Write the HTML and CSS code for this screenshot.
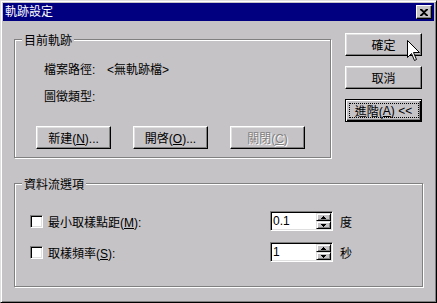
FILE: index.html
```html
<!DOCTYPE html>
<html lang="zh-Hant">
<head>
    <meta charset="UTF-8">
    <title>軌跡設定</title>
    <link rel="stylesheet" href="styles.css">
</head>
<body>
    <div class="window">
        <div class="titlebar">
            <span class="title">軌跡設定</span>
            <button class="close-btn">
                <svg width="8" height="7" viewBox="0 0 8 7"><path d="M0 0h2l2 2 2-2h2v1L5 3.5 8 6v1H6L4 5 2 7H0V6l3-2.5L0 1z" fill="#000"/></svg>
            </button>
        </div>
        <div class="content">
            <div class="top-row">
                <div class="group group-track">
                    <div class="legend">目前軌跡</div>
                    <div class="info-grid">
                        <span>檔案路徑:</span><span>&lt;無軌跡檔&gt;</span>
                        <span class="row-gap">圖徵類型:</span><span></span>
                    </div>
                    <div class="track-buttons">
                        <button class="btn">新建(<u>N</u>)...</button>
                        <button class="btn">開啓(<u>O</u>)...</button>
                        <button class="btn disabled">關閉(<u>C</u>)</button>
                    </div>
                </div>
                <div class="side-buttons">
                    <button class="btn">確定</button>
                    <button class="btn">取消</button>
                    <button class="btn default"><span class="focus">進階(<u>A</u>) &lt;&lt;</span></button>
                </div>
            </div>
            <div class="group group-stream">
                <div class="legend">資料流選項</div>
                <div class="opt-row first">
                    <span class="check"></span>
                    <span class="opt-label">最小取樣點距(<u>M</u>):</span>
                    <div class="spin">
                        <span class="spin-value">0.1</span>
                        <div class="spin-arrows">
                            <span class="arrow"><svg width="5" height="3" viewBox="0 0 5 3"><path d="M2 0h1v1h1v1h1v1H0V2h1V1h1z" fill="#000"/></svg></span>
                            <span class="arrow"><svg width="5" height="3" viewBox="0 0 5 3"><path d="M0 0h5v1H4v1H3v1H2V2H1V1H0z" fill="#000"/></svg></span>
                        </div>
                    </div>
                    <span class="unit">度</span>
                </div>
                <div class="opt-row">
                    <span class="check"></span>
                    <span class="opt-label">取樣頻率(<u>S</u>):</span>
                    <div class="spin">
                        <span class="spin-value">1</span>
                        <div class="spin-arrows">
                            <span class="arrow"><svg width="5" height="3" viewBox="0 0 5 3"><path d="M2 0h1v1h1v1h1v1H0V2h1V1h1z" fill="#000"/></svg></span>
                            <span class="arrow"><svg width="5" height="3" viewBox="0 0 5 3"><path d="M0 0h5v1H4v1H3v1H2V2H1V1H0z" fill="#000"/></svg></span>
                        </div>
                    </div>
                    <span class="unit">秒</span>
                </div>
            </div>
        </div>
        <svg class="cursor" width="13" height="21" viewBox="0 0 13 21">
            <path d="M0.5 0.5V17.5L4.5 13.5L7.5 20.5L9.5 19.5L6.5 12.5H12.5Z" fill="#fff" stroke="#000" stroke-width="1"/>
        </svg>
    </div>
</body>
</html>
```

FILE: styles.css
```css
body {
    margin: 0;
    background-color: #c6c3c6;
}

.window {
    position: relative;
    width: 437px;
    height: 303px;
    box-sizing: border-box;
    padding: 2px;
    border: 1px solid;
    border-color: #dfdfdf #000 #000 #dfdfdf;
    box-shadow: inset 1px 1px #fff, inset -1px -1px #808080;
    background-color: #c6c3c6;
    font-family: "Liberation Sans", "Noto Sans CJK TC", sans-serif;
    font-size: 12px;
    color: #000;
}

.titlebar {
    height: 18px;
    display: flex;
    align-items: center;
    justify-content: space-between;
    padding: 0 2px;
    background-color: #000080;
    color: #fff;
}

.title {
    line-height: 18px;
}

.close-btn {
    width: 16px;
    height: 14px;
    padding: 0;
    display: flex;
    align-items: center;
    justify-content: center;
    border: 1px solid;
    border-color: #fff #000 #000 #fff;
    box-shadow: inset -1px -1px #808080;
    background-color: #c6c3c6;
}

.content {
    display: flex;
    flex-direction: column;
    padding: 12px 0 0 11px;
}

.top-row {
    display: flex;
    align-items: flex-start;
}

.group {
    box-sizing: border-box;
    border: 1px solid #808080;
    box-shadow: inset 1px 1px #fff, 1px 1px 0 #fff;
}

.legend {
    align-self: flex-start;
    height: 16px;
    line-height: 16px;
    margin: -7px 0 0 7px;
    padding: 0 2px;
    background-color: #c6c3c6;
    width: max-content;
}

.group-track {
    width: 317px;
    height: 119px;
    margin-top: 6px;
}

.info-grid {
    display: grid;
    grid-template-columns: 63px 1fr;
    grid-auto-rows: 16px;
    row-gap: 11px;
    line-height: 16px;
    margin-top: 13px;
    padding-left: 29px;
}

.track-buttons {
    display: flex;
    gap: 22px;
    margin-top: 21px;
    padding-left: 21px;
}

.btn {
    width: 75px;
    height: 23px;
    padding: 0;
    border: 1px solid;
    border-color: #fff #000 #000 #fff;
    box-shadow: inset -1px -1px #808080, inset 1px 1px #dfdfdf;
    background-color: #c6c3c6;
    font-family: inherit;
    font-size: 12px;
    color: #000;
}

.btn.disabled {
    color: #808080;
    text-shadow: 1px 1px 0 #fff;
}

.side-buttons {
    display: flex;
    flex-direction: column;
    gap: 10px;
    margin-left: 14px;
}

.side-buttons .btn {
    width: 77px;
}

.btn.default {
    border-color: #000;
    box-shadow: inset 1px 1px #fff, inset -1px -1px #000, inset -2px -2px #808080;
    display: flex;
    align-items: center;
    justify-content: center;
}

.focus {
    box-sizing: border-box;
    display: flex;
    align-items: center;
    justify-content: center;
    width: 70px;
    height: 15px;
    border: 1px dotted #000;
}

.group-stream {
    width: 409px;
    height: 104px;
    margin-top: 25px;
    display: flex;
    flex-direction: column;
}

.opt-row {
    display: flex;
    align-items: center;
    height: 20px;
    margin-top: 11px;
    padding-left: 15px;
}

.opt-row.first {
    margin-top: 18px;
}

.check {
    box-sizing: border-box;
    width: 13px;
    height: 13px;
    margin-right: 5px;
    border: 1px solid;
    border-color: #808080 #fff #fff #808080;
    box-shadow: inset 1px 1px #000, inset -1px -1px #dfdfdf;
    background-color: #fff;
}

.opt-label {
    width: 222px;
}

.spin {
    box-sizing: border-box;
    width: 63px;
    height: 20px;
    display: flex;
    padding: 1px;
    border: 1px solid;
    border-color: #808080 #fff #fff #808080;
    box-shadow: inset 1px 1px #000, inset -1px -1px #dfdfdf;
    background-color: #fff;
}

.spin-value {
    flex: 1;
    line-height: 16px;
    padding-left: 1px;
}

.spin-arrows {
    display: flex;
    flex-direction: column;
    width: 15px;
}

.arrow {
    box-sizing: border-box;
    height: 8px;
    display: flex;
    align-items: center;
    justify-content: center;
    border: 1px solid;
    border-color: #dfdfdf #000 #000 #dfdfdf;
    box-shadow: inset 1px 1px #fff, inset -1px -1px #808080;
    background-color: #c6c3c6;
}

.unit {
    margin-left: 7px;
}

.cursor {
    position: absolute;
    left: 406px;
    top: 39px;
}
```
